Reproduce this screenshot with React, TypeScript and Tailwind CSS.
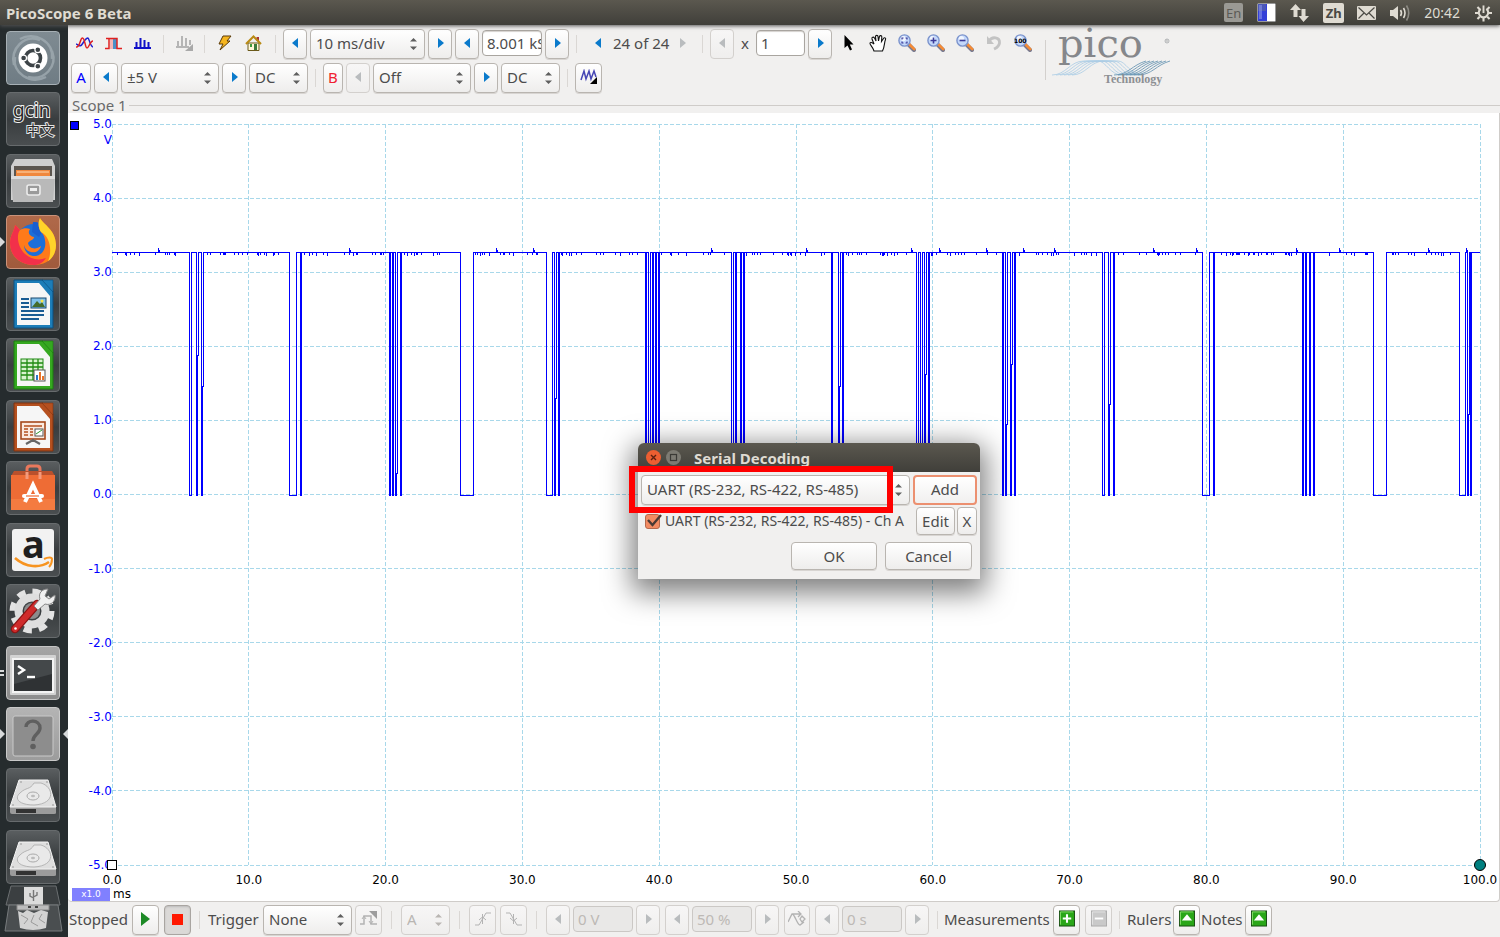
import React from "react";

type Kids = { children?: React.ReactNode };

/* ---------- signal data ---------- */

const HIGH = 128;
const LOW = 371;

// Intervals in which the line is low, in chart units. A third value is the
// height at which the rising edge shifts by one unit.
const lows: [number, number, number?][] = [
  [77, 79], [84, 86, 231], [89, 91, 262],
  [177, 184], [188, 189],
  [277, 278], [280, 281], [283, 285, 349], [288, 289],
  [348, 361],
  [434, 440], [442, 444, 274], [446, 447],
  [533, 534], [536, 538], [540, 541], [543, 544], [546, 547],
  [619, 621], [623, 624], [628, 629], [631, 632],
  [719, 720], [726, 728, 262], [730, 731],
  [804, 806], [808, 810], [812, 814, 250], [816, 817],
  [890, 891], [893, 895, 300], [898, 900, 240], [902, 903],
  [990, 992], [996, 998, 280], [1001, 1002],
  [1090, 1097], [1101, 1102],
  [1190, 1191], [1193, 1194], [1197, 1198], [1201, 1202],
  [1261, 1274],
  [1347, 1353], [1355, 1357, 290], [1358, 1359],
];

const spikes = [46, 237, 384, 421, 599, 694, 799, 827, 874, 911, 942, 1041, 1084, 1184, 1227, 1316, 1354];

function tracePath() {
  let d = `M0 ${HIGH}`;
  for (const [a, b, jog] of lows) {
    d += jog ? `H${a}V${LOW}H${b - 1}V${jog}H${b}V${HIGH}` : `H${a}V${LOW}H${b}V${HIGH}`;
  }
  return d + "H1368";
}

function noisePath() {
  let d = "";
  let seed = 17;
  let x = 2;
  while (x < 1350) {
    seed = (seed * 1103515245 + 12345) % 2147483648;
    const r = Math.floor(seed / 65536);
    x += r % 4 === 0 ? 5 + (r % 13) : 1 + (r % 5);
    if (lows.some(([a, b]) => x >= a - 5 && x <= b + 1)) continue;
    d += `M${x} ${HIGH}v${r % 3 === 0 ? 4 : 3}`;
  }
  for (const s of spikes) d += `M${s} ${HIGH}v-4M${s + 1} ${HIGH}v-2`;
  return d;
}

/* ---------- small controls ---------- */

const face = "border border-[#b9b5b0] rounded-[4px] bg-linear-to-b from-white to-[#eeedec] shadow-[0_1px_0_#d8d5d2]";
const faceOff = "border border-[#d3d0cd] rounded-[4px] bg-linear-to-b from-[#f7f6f6] to-[#efeeed]";

function Btn({ label, w = "w-[24px]", off, children, tone = "" }: Kids & { label: string; w?: string; off?: boolean; tone?: string }) {
  return (
    <button aria-label={label} disabled={off} className={`flex h-[30px] shrink-0 items-center justify-center pb-[2px] ${w} ${off ? faceOff : face} ${tone}`}>
      {children}
    </button>
  );
}

function Tri({ dir, off }: { dir: "l" | "r"; off?: boolean }) {
  return (
    <svg width="7" height="10" viewBox="0 0 7 10" className={off ? "fill-[#b9bcbe]" : "fill-[#0a7acb]"}>
      <path d={dir === "l" ? "M6 0V10L0 5Z" : "M1 0V10L7 5Z"} />
    </svg>
  );
}

function Step({ dir, label, off }: { dir: "l" | "r"; label: string; off?: boolean }) {
  return (
    <Btn label={label} off={off}>
      <Tri dir={dir} off={off} />
    </Btn>
  );
}

function Combo({ label, value, w, off, id }: { label: string; value: string; w: string; off?: boolean; id?: string }) {
  return (
    <span className={`relative block h-[30px] shrink-0 ${w}`}>
      <select id={id} aria-label={label} disabled={off} className={`h-full w-full appearance-none pb-[2px] pl-[5px] opacity-100 ${off ? faceOff + " text-[#b9b6b2]" : face}`}>
        <option>{value}</option>
      </select>
      <svg width="7" height="12" viewBox="0 0 7 12" className={`pointer-events-none absolute top-[9px] right-[8px] ${off ? "fill-[#b9b6b2]" : "fill-[#5f5f5f]"}`}>
        <path d="M0 3.5L3.5 0L7 3.5ZM0 8.5H7L3.5 12Z" />
      </svg>
    </span>
  );
}

function Field({ label, value, w, off, id }: { label: string; value: string; w: string; off?: boolean; id?: string }) {
  return (
    <input
      id={id}
      aria-label={label}
      defaultValue={value}
      disabled={off}
      className={`mb-[2px] h-[26px] shrink-0 rounded-[4px] border pl-[4px] ${w} ${off ? "border-[#cbc8c5] bg-[#e9e8e7] text-[#bdb9b5]" : "border-[#a9a5a0] bg-white shadow-[inset_0_1px_1px_#d5d2cf]"}`}
    />
  );
}

function Sep({ m = "mx-[7px]" }: { m?: string }) {
  return <span className={`h-[18px] w-px shrink-0 bg-[#dad7d4] ${m}`} />;
}

function Tool({ label, children }: Kids & { label: string }) {
  return (
    <button aria-label={label} className="flex h-[30px] w-[29px] shrink-0 items-center justify-center pb-[2px]">
      {children}
    </button>
  );
}

/* ---------- toolbar drawings ---------- */

function Lens({ children }: Kids) {
  return (
    <svg width="18" height="18" viewBox="0 0 18 18">
      <path d="M10 10L16 16" stroke="#77798f" strokeWidth="4" strokeLinecap="round" />
      <path d="M11.5 10.5L16.200 15.200" stroke="#f58b35" strokeWidth="2.600" strokeLinecap="round" />
      <circle cx="6.5" cy="6.5" r="5.6" fill="#c3d8fb" stroke="#7b93cc" strokeWidth="1.4" />
      <circle cx="5.4" cy="4.6" r="2.6" fill="#f1f6ff" />
      {children}
    </svg>
  );
}

function PicoLogo() {
  return (
    <svg width="120" height="56" viewBox="0 0 120 56" className="shrink-0 overflow-visible" role="img" aria-label="pico Technology">
      <g fill="none" strokeWidth="0.8">
        {[0, 4, 8, 12, 16, 20].map((k) => (
          <path key={k} stroke="#a9cbe4" d={`M${k} 42C${14 + k} 42 ${18 + k} 28 ${32 + k} 28H${46 + k}C${54 + k} 28 ${58 + k} 42 ${70 + k} 42`} />
        ))}
        {[0, 4, 8, 12, 16, 20, 24].map((k) => (
          <path key={k} stroke="#5d8ead" d={`M${62 + k} 42C${76 + k} 42 ${80 + k} 32 ${94 + k} 28`} />
        ))}
      </g>
      <text x="6" y="24" className="fill-[#85878b] font-['DejaVu_Serif',serif] text-[40px]">pico</text>
      <circle cx="115" cy="8" r="2" fill="none" stroke="#9a9ca0" strokeWidth="0.700" />
      <path d="M114.300 9.200V6.800H115.300Q116 7.400 115.200 8H114.500M115.200 8L115.900 9.200" fill="none" stroke="#9a9ca0" strokeWidth="0.400" />
      <text x="52" y="50" className="fill-[#8d8f93] font-['Liberation_Serif',serif] text-[12px] font-bold">Technology</text>
    </svg>
  );
}

/* ---------- launcher ---------- */

function Tile({ label, tone = "from-[#5a5e60] via-[#393d3f] to-[#4a4e50] border-[#676b6d]", left, right, children }: Kids & { label: string; tone?: string; left?: boolean; right?: boolean }) {
  return (
    <div className="relative flex w-full justify-center pr-[2px]">
      {left && <span className="absolute top-[22px] left-0 border-y-[5px] border-l-[5px] border-y-transparent border-l-[#d8dadb]" />}
      {right && <span className="absolute top-[22px] right-0 border-y-[5px] border-r-[5px] border-y-transparent border-r-[#d8dadb]" />}
      <button aria-label={label} className={`h-[54px] w-[54px] rounded-[4px] border bg-linear-to-b ${tone}`}>
        <svg viewBox="1 1 52 52" className="h-full w-full overflow-visible">{children}</svg>
      </button>
    </div>
  );
}

function Doc({ edge, dark, children }: Kids & { edge: string; dark: string }) {
  return (
    <>
      <path d="M8 3H37L47 14V51H8Z" fill={edge} stroke={dark} />
      <path d="M11 6H33L44 19V48H11Z" fill="#f6f6f6" />
      <path d="M36 3H47V15Z" fill={edge} stroke={dark} strokeWidth="0.6" />
      {children}
    </>
  );
}

function Disk() {
  return (
    <>
      <path d="M4 38H50V45Q50 46 48 46H6Q4 46 4 44Z" fill="#9b9b9b" />
      <path d="M10 41H30V45H10Z" fill="#333" />
      <path d="M13 12H42L50 39H4Z" fill="#dedede" stroke="#f3f3f3" />
      <path d="M35 15C48 19 50 36 28 37C12 37 8 30 14 25C20 19 24 22 28 15Z" fill="#e9e9e9" stroke="#b5b5b5" />
      <ellipse cx="27" cy="28" rx="6" ry="4" fill="none" stroke="#aaa" />
      <ellipse cx="27" cy="28" rx="2" ry="1.2" fill="#bbb" />
      <path d="M6 37H8M46 37H48M14 14H16M40 14H42" stroke="#999" />
    </>
  );
}

function Launcher() {
  return (
    <nav aria-label="Launcher" className="flex w-[68px] shrink-0 flex-col bg-[#262c2e] pt-[6px] pb-[5px]">
      <div className="flex flex-1 flex-col justify-between">
        <Tile label="Dash" tone="from-[#7f8b92] to-[#6f7c84] border-[#a7b0b5]">
          <path d="M8 34C4 18 18 3 34 9M46 20C52 36 38 50 22 46M14 8C28 0 48 10 46 28M40 46C24 54 6 42 9 26" fill="none" stroke="#a5b0b6" strokeWidth="2.5" opacity="0.7" />
          <circle cx="27" cy="27" r="14.5" fill="#fff" />
          <circle cx="27" cy="27" r="7.5" fill="none" stroke="#3c4347" strokeWidth="3.6" />
          <g fill="#3c4347" stroke="#fff" strokeWidth="1.2">
            <circle cx="17.6" cy="27" r="2.9" />
            <circle cx="31.8" cy="18.8" r="2.9" />
            <circle cx="31.8" cy="35.2" r="2.9" />
          </g>
        </Tile>
        <Tile label="gcin">
          <text x="7" y="25" className="fill-[#2a2a2a] stroke-[#f0f0f0] font-['Noto_Sans',sans-serif] text-[19px] [paint-order:stroke] [stroke-width:2px]">gcin</text>
          <text x="20" y="43" className="fill-[#2a2a2a] stroke-[#e4e4e4] font-['Noto_Sans_CJK_TC',sans-serif] text-[14px] [paint-order:stroke] [stroke-width:2px]">中文</text>
        </Tile>
        <Tile label="Files">
          <path d="M9 5H46L49 12V46H5V12Z" fill="#cfcfcf" />
          <path d="M8 12H46V24H8Z" fill="#5c5650" />
          <path d="M10 16H44V24H10Z" fill="#f0883e" />
          <path d="M11 18H43" stroke="#ffd9b0" />
          <path d="M5 22H49L47 48H7Z" fill="#b9b9b9" />
          <path d="M5 22H49V25H5Z" fill="#dcdcdc" />
          <rect x="21" y="31" width="13" height="10" rx="2" fill="#9a9a9a" stroke="#ececec" strokeWidth="1.6" />
          <rect x="24" y="34" width="7" height="3" fill="#eee" />
        </Tile>
        <Tile label="Firefox" left tone="from-[#b0694a] to-[#a05a3c] border-[#c9927a]">
          <circle cx="28" cy="27" r="18" fill="#1d6fd8" />
          <path d="M27 7C33 7 37 9 39 12L33 22L26 17Z" fill="#1a5fd0" />
          <path d="M34 3C37 9 50 15 50 30C50 43 40 50 28 50C14 50 4 41 4 28C4 20 8 17 9 10C12 12 13 14 14 15C17 13 21 13 24 14C21 18 24 21 28 22C28 25 24 25 22 28C23 34 30 35 35 31C33 40 20 39 18 30C18 36 23 42 30 41C42 39 41 22 35 17C32 13 32 7 34 3Z" fill="#ff7a1a" />
          <path d="M4 28C4 20 8 17 9 10C12 12 13 14 14 15C10 20 12 32 18 38C24 44 32 46 40 43C36 49 32 50 28 50C14 50 4 41 4 28Z" fill="#f2304a" />
          <path d="M34 3C37 9 50 15 50 30C50 38 46 44 42 46C46 38 45 22 35 17C32 13 32 7 34 3Z" fill="#ffd42a" />
        </Tile>
        <Tile label="Writer">
          <Doc edge="#1c7db8" dark="#0d4e7c">
            <path d="M15 22H23M15 26H23M15 30H23M15 34H38M15 38H38M15 42H33" stroke="#1a5c93" strokeWidth="2" />
            <rect x="25" y="21" width="15" height="10" fill="#7fc0ea" stroke="#18486e" />
            <path d="M26 30L31 24L34 27L36 25L39 30Z" fill="#446b2b" />
            <circle cx="36" cy="24" r="1.5" fill="#f7e44a" />
          </Doc>
        </Tile>
        <Tile label="Calc">
          <Doc edge="#35a820" dark="#1d7a10">
            <rect x="15" y="21" width="22" height="21" fill="#d9f3cf" stroke="#1f8a12" />
            <path d="M15 25H37M15 29H37M15 33H37M15 37H37M21 21V42M27 21V42M32 21V42" stroke="#1f8a12" strokeWidth="1.300" />
            <rect x="28" y="32" width="11" height="11" fill="#fff" stroke="#555" />
            <path d="M33 42V34H35V42ZM36 42V38H38V42Z" fill="#e8742a" />
            <path d="M30 42V37H32V42Z" fill="#2a78c8" />
          </Doc>
        </Tile>
        <Tile label="Impress">
          <Doc edge="#b5501f" dark="#7d3210">
            <rect x="15" y="22" width="24" height="17" fill="#fbeadf" stroke="#a5481b" strokeWidth="1.6" />
            <path d="M18 26H36M18 29H22M24 29H27M18 32H22M24 32H27M18 35H22M24 35H27" stroke="#b5501f" strokeWidth="1.6" />
            <rect x="29" y="29" width="8" height="7" fill="#fff" stroke="#555" />
            <path d="M30 34L33 32L36 30" stroke="#2c9a2c" fill="none" />
            <path d="M27 39V42M27 40L20 44M27 40L34 44" stroke="#666" strokeWidth="2.200" />
          </Doc>
        </Tile>
        <Tile label="Software">
          <path d="M21 18V8Q21 5 24 5H31Q34 5 34 8V18" fill="none" stroke="#e9785c" strokeWidth="3" />
          <path d="M8 10H46L49 15H5Z" fill="#b9502c" />
          <path d="M5 14H49V49H5Z" fill="#ee6c35" />
          <path d="M5 38H49V49H5Z" fill="#f47b40" />
          <path d="M21 18V11M34 18V11" stroke="#f39a7c" strokeWidth="3" />
          <path d="M19 41L27 24L35 41" fill="none" stroke="#fff" strokeWidth="4" />
          <path d="M18 35H36" stroke="#fff" strokeWidth="4" strokeLinecap="round" />
          <path d="M20 35H33" stroke="#ee6c35" strokeWidth="1.2" />
        </Tile>
        <Tile label="Amazon">
          <rect x="6" y="6" width="42" height="42" rx="3" fill="#f2f2f2" />
          <text x="16" y="35" className="fill-[#1f1f1f] font-['Noto_Sans',sans-serif] text-[38px] font-bold">a</text>
          <path d="M9 35C20 45 34 45 43 39" fill="none" stroke="#f79420" strokeWidth="2.6" />
          <path d="M38 36C42 34 46 34 46 36C46 39 45 42 43 44" fill="none" stroke="#f79420" strokeWidth="2" />
        </Tile>
        <Tile label="System Settings">
          <circle cx="26" cy="27" r="19" fill="none" stroke="#e3e3e3" strokeWidth="7" strokeDasharray="8 6.9" />
          <circle cx="26" cy="27" r="13.5" fill="none" stroke="#dedede" strokeWidth="8" />
          <circle cx="26" cy="27" r="8" fill="#8c8c8c" />
          <path d="M9 45L31 20" stroke="#8c1313" strokeWidth="8.5" strokeLinecap="round" />
          <path d="M9 45L31 20" stroke="#cf2b2b" strokeWidth="6" strokeLinecap="round" />
          <path d="M28 22L34 15C32 9 36 5 42 5L39 12L43 15L49 11C50 17 45 22 39 20L32 26Z" fill="#f0f0f0" stroke="#888" />
          <circle cx="9.500" cy="44.500" r="1.300" fill="#fff" />
        </Tile>
        <div className="relative">
          <span className="absolute top-[24px] left-0 h-[6px] w-[4px] border-y-2 border-[#d8dadb]" />
          <Tile label="Terminal" tone="from-[#a5a5a5] to-[#8d8d8d] border-[#c4c4c4]">
            <rect x="4" y="9" width="46" height="40" rx="1" fill="#d2d2d2" />
            <rect x="6" y="12" width="42" height="35" fill="#f3f3f3" />
            <rect x="8" y="14" width="38" height="31" fill="#2f3234" />
            <path d="M8 14H46V28L8 38Z" fill="#44484a" />
            <path d="M12 20L18 24L12 28" fill="none" stroke="#fff" strokeWidth="2.4" />
            <path d="M21 31H29" stroke="#fff" strokeWidth="2.4" />
          </Tile>
        </div>
        <Tile label="Unknown application" left right tone="from-[#b4b4b4] to-[#9c9c9c] border-[#c9c9c9]">
          <rect x="7" y="9" width="40" height="40" rx="2" fill="#8d8d8d" stroke="#c9c9c9" />
          <path d="M20 20C20 12 34 12 34 21C34 27 27 27 27 34" fill="none" stroke="#5f5f5f" strokeWidth="3.400" />
          <circle cx="27" cy="39.500" r="2.800" fill="#5f5f5f" />
        </Tile>
        <Tile label="Disk 1"><Disk /></Tile>
        <Tile label="Disk 2"><Disk /></Tile>
      </div>
      <button aria-label="Removable media and trash" className="mt-px h-[47px] w-full">
        <svg viewBox="0 0 68 47" className="h-full w-full">
          <path d="M11 1H56L60 20H6Z" fill="#3b3f41" stroke="#6b6f71" />
          <path d="M9 20H58L62 46H5Z" fill="#4a4e50" stroke="#777b7d" />
          <path d="M24 2H43V20H24Z" fill="#dcdcdc" />
          <path d="M33.500 5V16M30 8V11L33.500 13M37 7V10L33.500 12" fill="none" stroke="#777" strokeWidth="1.4" />
          <path d="M17 20H49V25H17Z" fill="#bcbcbc" stroke="#888" />
          <path d="M28 22H31M35 22H38" stroke="#444" strokeWidth="2" />
          <path d="M18 26L23 28L27 25L34 28L41 25L48 27L46 43Q33 47 20 43Z" fill="#d3d3d3" />
          <path d="M21 30L28 34L24 39M34 30L31 37L38 41M42 29L39 34L45 38" fill="none" stroke="#9b9b9b" />
        </svg>
      </button>
    </nav>
  );
}

/* ---------- panels ---------- */

function TopBar() {
  return (
    <header className="relative z-10 flex h-[25px] shrink-0 items-center bg-linear-to-b from-[#5b584f] to-[#403f3a] pr-[8px] pl-[6px] text-[#dfdbd2] shadow-[0_1px_4px_#555]">
      <h1 className="flex-1 font-bold">PicoScope 6 Beta</h1>
      <div className="flex items-center">
        <span className="mr-[14px] flex h-[19px] w-[19px] items-center justify-center rounded-[2px] bg-[#9a9994] text-[13px] text-[#5b5a56]">En</span>
        <svg width="19" height="19" viewBox="0 0 19 19" className="mr-[14px]">
          <rect width="19" height="19" fill="#fff" stroke="#333" />
          <rect x="1" y="1" width="9" height="17" fill="#3440d8" />
          <rect x="1" y="1" width="8" height="7" fill="#4c58b8" />
          <path d="M2 2H5V16H2Z" fill="#8a94e8" opacity="0.6" />
        </svg>
        <svg width="19" height="18" viewBox="0 0 19 18" className="mr-[14px] fill-[#dfdbd2]">
          <path d="M5.500 0L11 6H7.500V13H3.500V6H0ZM13.500 18L8.500 12H11.500V5H15.500V12H19Z" />
        </svg>
        <span className="mr-[13px] flex h-[20px] w-[21px] items-center justify-center rounded-[2px] bg-[#dfdbd2] text-[13px] font-bold text-[#4a4944]">Zh</span>
        <svg width="19" height="14" viewBox="0 0 19 14" className="mr-[14px]">
          <rect width="19" height="14" rx="1" fill="#dfdbd2" />
          <path d="M1.500 1.500L9.500 9L17.500 1.500M1.500 12.500L7 7M17.500 12.500L12 7" fill="none" stroke="#4a4944" strokeWidth="1.2" />
        </svg>
        <svg width="21" height="18" viewBox="0 0 21 18" className="mr-[13px]">
          <path d="M0 6H3L8 2V16L3 12H0Z" fill="#dfdbd2" />
          <path d="M10.500 6Q12.500 9 10.500 12M13.500 4Q16.500 9 13.500 14" fill="none" stroke="#dfdbd2" strokeWidth="1.6" />
          <path d="M16.500 1.500Q21 9 16.500 16.500" fill="none" stroke="#8d8b84" strokeWidth="1.6" />
        </svg>
        <time className="mr-[15px] text-[14px]">20:42</time>
        <svg width="17" height="18" viewBox="0 0 18 18" fill="none" stroke="#dfdbd2">
          <path d="M6 4.600A5 5 0 1 0 12 4.600" strokeWidth="2.200" />
          <path d="M9 1V9" strokeWidth="2" />
          <path d="M9 14V18M0 9H4M14 9H18M2.600 15.400L5 13M15.400 15.400L13 13M2.600 2.600L5 5M15.400 2.600L13 5" strokeWidth="2.200" />
        </svg>
      </div>
    </header>
  );
}

function Toolbars() {
  return (
    <div className="flex items-start pt-[4px] pb-[4px]">
      <div className="flex flex-col gap-[4px] pl-[2px]">
        <div className="flex items-center">
          <Tool label="Scope mode">
            <svg width="17" height="12" viewBox="0 0 17 12" fill="none" strokeWidth="1.500">
              <path d="M0 7C3 8 4 11 7 6S11 1 12 1S14 9 17 10" stroke="#2020d0" />
              <path d="M0 10C4 11 4 1 6.500 1S9 11 11 11S14 4 17 4" stroke="#e02020" />
            </svg>
          </Tool>
          <Tool label="Persistence mode">
            <svg width="17" height="13" viewBox="0 0 17 13">
              <path d="M8 2H12V12H8Z" fill="#4a90c8" /><path d="M5 2H8V12H5Z" fill="#f5b5b5" />
              <path d="M0 11.500H4V1.500H12V11.500H17M1 1.500H4" fill="none" stroke="#e02020" strokeWidth="1.500" />
            </svg>
          </Tool>
          <Tool label="Spectrum mode">
            <svg width="17" height="12" viewBox="0 0 17 12"><path d="M0 11H17M2.500 11V5M6.500 11V1M10.500 11V3M14.500 11V5" stroke="#1010c8" strokeWidth="2" /></svg>
          </Tool>
          <Sep m="mx-[6px]" />
          <Tool label="Spectrum options">
            <svg width="17" height="16" viewBox="0 0 17 16"><path d="M0 12H13M2 12V6M6 12V1M10 12V3M14 10V5" stroke="#b5b5b5" strokeWidth="2" /><path d="M17 9V16H9Z" fill="#a9a9a9" /></svg>
          </Tool>
          <Sep m="mx-[5px]" />
          <Tool label="Auto setup">
            <svg width="14" height="16" viewBox="0 0 14 16"><path d="M5 1H13L9 6H12L2 15L5 9H1Z" fill="#f5b51e" stroke="#5a3a08" /></svg>
          </Tool>
          <Tool label="Home">
            <svg width="17" height="16" viewBox="0 0 17 16">
              <path d="M11.500 2H14V6H11.500Z" fill="#a33" /><path d="M3 8H14V15.500H3Z" fill="#fff7d8" stroke="#6b5a1a" />
              <path d="M1 9L8.500 1.500L16 9" fill="none" stroke="#b98a14" strokeWidth="2" /><path d="M5 9H7V12H5Z" fill="#3a9a3a" /><path d="M9 9H12V15H9Z" fill="#3c7a3c" />
            </svg>
          </Tool>
          <Sep />
          <div className="flex items-center gap-[3px]">
            <Step dir="l" label="Shorter timebase" />
            <Combo label="Timebase" value="10 ms/div" w="w-[115px]" />
            <Step dir="r" label="Longer timebase" />
            <Step dir="l" label="Fewer samples" />
            <Field label="Samples" value="8.001 kS" w="w-[60px]" />
            <Step dir="r" label="More samples" />
          </div>
          <Sep />
          <Tool label="Previous buffer"><Tri dir="l" /></Tool>
          <span className="w-[55px] pb-[2px] text-center whitespace-nowrap">24 of 24</span>
          <Tool label="Next buffer"><Tri dir="r" off /></Tool>
          <Sep m="mr-[7px] ml-[5px]" />
          <div className="flex items-center gap-[3px]">
            <Step dir="l" label="Zoom out horizontally" off />
            <label htmlFor="zoomx" className="w-[16px] pb-[2px] text-center">x</label>
            <Field id="zoomx" label="x" value="1" w="w-[49px]" />
            <Step dir="r" label="Zoom in horizontally" />
          </div>
          <div className="ml-[2px] flex">
            <Tool label="Select">
              <svg width="10" height="16" viewBox="0 0 10 16"><path d="M0.500 0V13L3.500 10.500L6 15.500L8 14.500L5.800 9.500H9.500Z" fill="#000" /></svg>
            </Tool>
            <Tool label="Hand">
              <svg width="18" height="18" viewBox="0 0 18 18"><path d="M5 17C4 13 1 11 1 9.500S3 8 5 10L3 5C2.500 3 4.500 2.500 5.500 4L7 7L6.500 2.500C6.500 1 9 1 9 2.500L9.500 7L10.500 2.500C11 1 13 1.500 12.800 3L12.500 7.500L14.500 4.500C15.500 3 17.200 4 16.500 5.500C15 9 16 12 13.500 17Z" fill="#fff" stroke="#111" strokeWidth="1.100" /></svg>
            </Tool>
            <Tool label="Marquee zoom"><Lens><path d="M4 5.500V4H5.500M7.500 4H9V5.500M9 7.500V9H7.500M5.500 9H4V7.500" fill="none" stroke="#3a3a98" strokeWidth="1.200" /></Lens></Tool>
            <Tool label="Zoom in"><Lens><path d="M3.500 6.500H9.500M6.500 3.500V9.500" stroke="#3a3a98" strokeWidth="1.600" /></Lens></Tool>
            <Tool label="Zoom out"><Lens><path d="M3.500 6.500H9.500" stroke="#3a3a98" strokeWidth="1.600" /></Lens></Tool>
            <Tool label="Undo zoom">
              <svg width="16" height="16" viewBox="0 0 16 16"><path d="M3 6C6 1 14 2 13.500 8C13 12 10 13 8 14" fill="none" stroke="#c3c3c3" strokeWidth="2.800" /><path d="M1 1V9H8Z" fill="#c3c3c3" /></svg>
            </Tool>
            <Tool label="Zoom to 100"><Lens><text x="0" y="9" className="fill-black font-['DejaVu_Sans',sans-serif] text-[6px] font-bold">100</text></Lens></Tool>
          </div>
        </div>
        <div className="flex items-center pl-px">
          <div className="flex items-center gap-[3px]">
            <Btn label="Channel A" w="w-[20px]" tone="text-[#0000ff]">A</Btn>
            <Step dir="l" label="Lower range A" />
            <Combo label="Range A" value="±5 V" w="w-[98px]" />
            <Step dir="r" label="Higher range A" />
            <Combo label="Coupling A" value="DC" w="w-[59px]" />
          </div>
          <Sep />
          <div className="flex items-center gap-[3px]">
            <Btn label="Channel B" w="w-[20px]" tone="text-[#f02030]">B</Btn>
            <Step dir="l" label="Lower range B" off />
            <Combo label="Range B" value="Off" w="w-[98px]" />
            <Step dir="r" label="Higher range B" />
            <Combo label="Coupling B" value="DC" w="w-[59px]" />
          </div>
          <Sep />
          <Btn label="Signal generator" w="w-[27px]">
            <svg width="18" height="17" viewBox="0 0 18 17"><path d="M1 11L4 2L6 10L9 2L11 10L14 2L16 8" fill="none" stroke="#4646b4" strokeWidth="1.500" /><path d="M17 8V15H10Z" fill="#000" /></svg>
          </Btn>
        </div>
      </div>
      <span className="mt-[11px] ml-[8px] h-[40px] w-px bg-[#d3d0cd]" />
      <span className="mt-[4px] ml-[6px]"><PicoLogo /></span>
    </div>
  );
}

const volts = ["5.0", "4.0", "3.0", "2.0", "1.0", "0.0", "-1.0", "-2.0", "-3.0", "-4.0", "-5.0"];
const times = ["0.0", "10.0", "20.0", "30.0", "40.0", "50.0", "60.0", "70.0", "80.0", "90.0", "100.0"];

function Chart() {
  const steps = [0, 1, 2, 3, 4, 5, 6, 7, 8, 9, 10];
  return (
    <section aria-label="Scope 1 view" className="flex min-h-0 flex-1 flex-col overflow-hidden rounded-b-[4px] border-r border-b border-[#cfccc9] bg-white pt-[11px] font-['DejaVu_Sans',sans-serif] text-[12px] leading-[14px]">
      <div className="flex min-h-0 flex-1">
        <div className="relative flex w-[44px] flex-col justify-between text-[#0000ff]">
          <span className="absolute top-[-3px] left-[2px] h-[9px] w-[9px] border border-black bg-[#0000ff]" />
          {volts.map((v) => (
            <span key={v} className="flex h-0 items-center justify-end">{v}</span>
          ))}
          <span className="absolute top-[9px] right-0">V</span>
        </div>
        <div className="relative mr-[19px] min-w-0 flex-1">
          <svg viewBox="0 0 1368 741" preserveAspectRatio="none" className="absolute h-full w-full overflow-visible" shapeRendering="crispEdges">
            <g stroke="#a8d8ea" strokeDasharray="4 2">
              {steps.map((i) => (
                <path key={i} d={`M${i * 136.8} 0V741M0 ${i * 74.1}H1368`} vectorEffect="non-scaling-stroke" />
              ))}
            </g>
            <path d={noisePath()} stroke="#0000ff" fill="none" vectorEffect="non-scaling-stroke" />
            <path d={tracePath()} stroke="#0000ff" fill="none" vectorEffect="non-scaling-stroke" />
          </svg>
          <span className="absolute bottom-[-5px] left-[-5px] h-[10px] w-[10px] border border-black bg-white" />
          <span className="absolute right-[-6px] bottom-[-6px] h-[12px] w-[12px] rounded-full border border-black bg-[#008080]" />
        </div>
      </div>
      <div className="mr-[19px] ml-[44px] flex justify-between pt-[8px] text-black">
        {times.map((t) => (
          <span key={t} className="flex w-0 justify-center">{t}</span>
        ))}
      </div>
      <div className="flex items-center gap-[3px] pl-[4px] text-black">
        <span className="h-[13px] w-[38px] bg-[#8080ff] text-center text-[9px] leading-[13px] text-white">x1.0</span>
        <span>ms</span>
      </div>
    </section>
  );
}

function GreenIcon({ kind }: { kind: "plus" | "minus" | "up" }) {
  const off = kind === "minus";
  return (
    <svg width="16" height="17" viewBox="0 0 17 17">
      <rect x="0.500" y="0.500" width="16" height="16" fill={off ? "#c9c9c9" : "#2aa618"} stroke={off ? "#aaa" : "#164a10"} />
      <path d="M1.500 15V1.500H15" fill="none" stroke={off ? "#e5e5e5" : "#8be070"} />
      {kind === "plus" && <path d="M4 8.500H13M8.500 4V13" stroke="#fff" strokeWidth="2.200" />}
      {kind === "minus" && <path d="M4 8.500H13" stroke="#fff" strokeWidth="2" />}
      {kind === "up" && <path d="M8.500 4L14 10.500H3Z" fill="#fff" />}
    </svg>
  );
}

function StatusBar() {
  const grey = "fill-none stroke-[#b3b3b3]";
  return (
    <footer className="flex h-[35px] shrink-0 items-center pl-px">
      <span className="w-[63px] pb-[2px]">Stopped</span>
      <div className="flex gap-[5px]">
        <Btn label="Start" w="w-[27px]"><svg width="9" height="14" viewBox="0 0 9 14"><path d="M0 0L9 7L0 14Z" fill="#1d8a26" /></svg></Btn>
        <button aria-label="Stop" className="flex h-[30px] w-[27px] items-center justify-center rounded-[4px] border border-[#a9a5a1] bg-[#dbd9d7] shadow-[inset_0_1px_2px_#bbb]">
          <span className="h-[11px] w-[11px] bg-[#ff1800]" />
        </button>
      </div>
      <Sep m="mx-[8px]" />
      <label htmlFor="trigger" className="w-[55px] pb-[2px]">Trigger</label>
      <Combo id="trigger" label="Trigger" value="None" w="w-[89px]" />
      <span className="w-[3px]" />
      <Btn label="Advanced triggers" w="w-[27px]" off>
        <svg width="18" height="16" viewBox="0 0 18 16" className={grey}><path d="M0 13H4V5H11V13H17" strokeWidth="1.500" /><path d="M2 8L4 5L6 8M9 10L11 13L13 10" /><path d="M9 0H17V8Z" className="fill-[#9d9d9d] stroke-none" /></svg>
      </Btn>
      <Sep m="mx-[9px]" />
      <Combo label="Trigger source" value="A" w="w-[49px]" off />
      <Sep m="mx-[9px]" />
      <div className="flex gap-[4px]">
        <Btn label="Rising edge" w="w-[27px]" off><svg width="16" height="14" viewBox="0 0 16 14" className={grey}><path d="M0 13H4L11 1H16M7.500 2V12M4 8L7.500 5L11 8" /></svg></Btn>
        <Btn label="Falling edge" w="w-[27px]" off><svg width="16" height="14" viewBox="0 0 16 14" className={grey}><path d="M0 1H4L11 13H16M7.500 2V12M4 6L7.500 9L11 6" /></svg></Btn>
      </div>
      <Sep m="mx-[9px]" />
      <div className="flex items-center gap-[5px]">
        <div className="flex items-center gap-[3px]">
          <Step dir="l" label="Lower threshold" off />
          <Field label="Threshold" value="0 V" w="w-[60px]" off />
          <Step dir="r" label="Raise threshold" off />
        </div>
        <div className="flex items-center gap-[3px]">
          <Step dir="l" label="Less pre-trigger" off />
          <Field label="Pre-trigger" value="50 %" w="w-[60px]" off />
          <Step dir="r" label="More pre-trigger" off />
        </div>
        <Btn label="Post-trigger delay" w="w-[26px]" off><svg width="18" height="16" viewBox="0 0 18 16" className={grey}><path d="M0 11L4 3C7 3 9 14 12 14L16 11M4 3H13M10 0L13 3L10 6M14 5L17 8L14 11L12 8Z" strokeWidth="1.300" /></svg></Btn>
        <div className="flex items-center gap-[3px]">
          <Step dir="l" label="Less delay" off />
          <Field label="Delay" value="0 s" w="w-[60px]" off />
          <Step dir="r" label="More delay" off />
        </div>
      </div>
      <Sep m="mr-[6px] ml-[8px]" />
      <span className="w-[109px] pb-[2px]">Measurements</span>
      <Btn label="Add measurement" w="w-[27px]"><GreenIcon kind="plus" /></Btn>
      <span className="w-[5px]" />
      <Btn label="Remove measurement" w="w-[27px]" off><GreenIcon kind="minus" /></Btn>
      <Sep />
      <span className="w-[46px] pb-[2px]">Rulers</span>
      <Btn label="Rulers" w="w-[27px]"><GreenIcon kind="up" /></Btn>
      <span className="w-[45px] pb-[2px] pl-px">Notes</span>
      <Btn label="Notes" w="w-[27px]"><GreenIcon kind="up" /></Btn>
    </footer>
  );
}

function SerialDialog() {
  return (
    <div role="dialog" aria-labelledby="dlg-title" className="absolute top-[443px] left-[638px] z-20 w-[342px] rounded-t-[6px] bg-[#f1f0ef] shadow-[0_8px_28px_6px_rgba(0,0,0,0.5)]">
      <div className="flex h-[29px] items-center rounded-t-[6px] bg-linear-to-b from-[#5b584f] to-[#403f3a] pl-[8px] text-[#dfdbd2]">
        <button aria-label="Close" className="mr-[5px] h-[15px] w-[15px] rounded-full bg-[#ec5e31]">
          <svg viewBox="0 0 15 15"><path d="M5 5L10 10M10 5L5 10" stroke="#5a2010" strokeWidth="1.400" /></svg>
        </button>
        <button aria-label="Maximize" className="mr-[13px] h-[15px] w-[15px] rounded-full bg-[#7d7b73]">
          <svg viewBox="0 0 15 15"><rect x="4.500" y="4.500" width="6" height="6" fill="none" stroke="#3b3a36" strokeWidth="1.200" /></svg>
        </button>
        <h2 id="dlg-title" className="font-bold">Serial Decoding</h2>
      </div>
      <div className="flex gap-[3px] px-[3px] pt-[3px]">
        <Combo label="Protocol" value="UART (RS-232, RS-422, RS-485)" w="w-[269px]" />
        <button className="h-[30px] flex-1 rounded-[4px] border-2 border-[#ec9070] bg-linear-to-b from-white to-[#f1f0ef] pb-[2px]">Add</button>
      </div>
      <div className="flex items-center pt-[2px] pr-[3px] pl-[7px]">
        <label className="flex min-w-0 flex-1 items-center gap-[5px] text-[14px] whitespace-nowrap">
          <span className="relative h-[15px] w-[15px] shrink-0">
            <input type="checkbox" defaultChecked className="block h-[15px] w-[15px] appearance-none rounded-[3px] border border-[#b5694c] bg-[#f28b62]" />
            <svg viewBox="0 0 17 15" className="pointer-events-none absolute top-0 left-0 h-[15px] w-[17px]"><path d="M3 6L7.500 11L16 1" fill="none" stroke="#4a3a34" strokeWidth="2.400" /></svg>
          </span>
          UART (RS-232, RS-422, RS-485) - Ch A
        </label>
        <button className={`mr-[2px] h-[28px] w-[39px] shrink-0 ${face}`}>Edit</button>
        <button className={`h-[28px] w-[20px] shrink-0 ${face}`}>X</button>
      </div>
      <div className="flex justify-end gap-[8px] pt-[7px] pr-[8px] pb-[9px]">
        <button className={`h-[28px] w-[86px] ${face}`}>OK</button>
        <button className={`h-[28px] w-[87px] ${face}`}>Cancel</button>
      </div>
      <span className="pointer-events-none absolute top-[23px] left-[-9px] h-[47px] w-[264px] border-[6px] border-[#ff0000]" />
    </div>
  );
}

export default function App() {
  return (
    <div className="relative flex h-screen flex-col overflow-hidden bg-[#f1f0ef] font-['Noto_Sans',sans-serif] text-[15px] leading-[20px] text-[#4c4c4c]">
      <TopBar />
      <div className="flex min-h-0 flex-1">
        <Launcher />
        <main className="flex min-w-0 flex-1 flex-col">
          <Toolbars />
          <div className="flex h-[16px] shrink-0 items-center gap-[2px] pl-[4px] text-[#6a6a6a]">
            <h2>Scope 1</h2>
            <span className="h-px flex-1 bg-[#cfccc9]" />
          </div>
          <Chart />
          <StatusBar />
        </main>
      </div>
      <SerialDialog />
    </div>
  );
}
